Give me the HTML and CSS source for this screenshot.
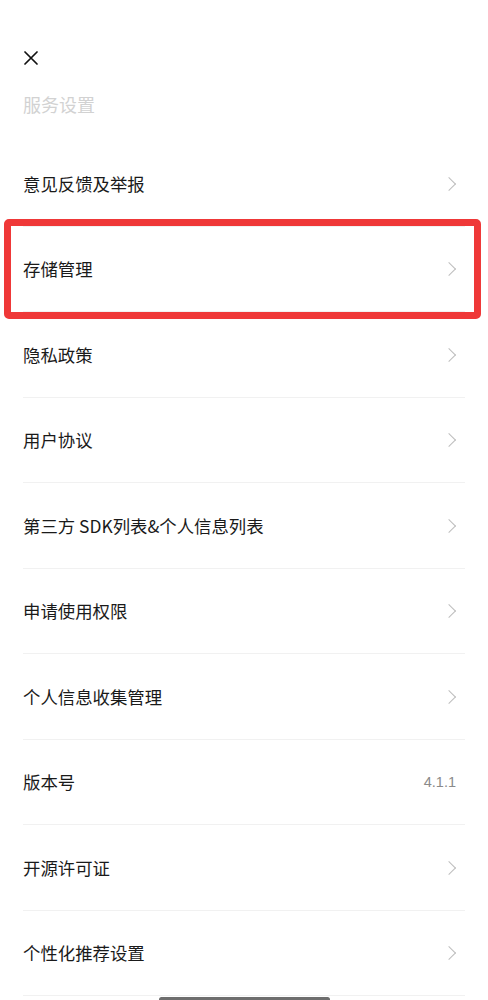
FILE: index.html
```html
<!DOCTYPE html>
<html lang="zh-CN">
<head>
<meta charset="utf-8">
<title>服务设置</title>
<link rel="stylesheet" href="styles.css">
</head>
<body>
<div class="page">
  <header class="header">
    <svg class="close" viewBox="0 0 14 14" width="14" height="14" aria-label="关闭">
      <path d="M1 1 L13 13 M13 1 L1 13" stroke="#111" stroke-width="1.7" stroke-linecap="round" fill="none"/>
    </svg>
    <h1 class="title">服务设置</h1>
  </header>
  <ul class="list">
    <li class="row"><span class="label">意见反馈及举报</span><span class="chev"></span></li>
    <li class="row row-marked"><span class="label">存储管理</span><span class="chev"></span><span class="highlight"></span></li>
    <li class="row"><span class="label">隐私政策</span><span class="chev"></span></li>
    <li class="row"><span class="label">用户协议</span><span class="chev"></span></li>
    <li class="row"><span class="label">第三方 SDK列表&amp;个人信息列表</span><span class="chev"></span></li>
    <li class="row"><span class="label">申请使用权限</span><span class="chev"></span></li>
    <li class="row"><span class="label">个人信息收集管理</span><span class="chev"></span></li>
    <li class="row"><span class="label">版本号</span><span class="value">4.1.1</span></li>
    <li class="row"><span class="label">开源许可证</span><span class="chev"></span></li>
    <li class="row"><span class="label">个性化推荐设置</span><span class="chev"></span></li>
  </ul>
  <div class="home-indicator"></div>
</div>
</body>
</html>
```
FILE: styles.css
```css
html, body {
  margin: 0;
  padding: 0;
  background: #fff;
}
body {
  font-family: "Noto Sans CJK SC", "Noto Sans", sans-serif;
  color: #1a1a1a;
  overflow: hidden;
}
.page {
  position: relative;
  height: 1000px;
  padding: 0 23px;
}
.header {
  padding-top: 51px;
}
.close {
  display: block;
  margin-left: 1px;
}
.title {
  margin: 26px 0 0;
  font-size: 18px;
  line-height: 26px;
  font-weight: 400;
  color: #d2d2d2;
}
.list {
  list-style: none;
  margin: 24.25px 0 0;
  padding: 0;
}
.row {
  position: relative;
  box-sizing: border-box;
  height: 85.5px;
  display: flex;
  align-items: center;
  justify-content: space-between;
  padding-right: 9px;
  border-bottom: 1px solid #f1f1f1;
  font-size: 17.4px;
}
.label {
  line-height: 24px;
}
.label:not(:only-child) {
  letter-spacing: 0;
}
.chev {
  width: 9px;
  height: 9px;
  border-top: 1.3px solid #bdbdbd;
  border-right: 1.3px solid #bdbdbd;
  transform: rotate(45deg);
  margin-right: 2px;
}
.value {
  font-family: "Liberation Sans", Arial, sans-serif;
  font-size: 14.5px;
  color: #8a8a8a;
}
.highlight {
  position: absolute;
  top: -7.5px;
  bottom: -7.5px;
  left: -19px;
  right: -16px;
  border: 7.5px solid #ef3838;
  border-radius: 5px;
  pointer-events: none;
}
.home-indicator {
  position: absolute;
  left: 159px;
  width: 171px;
  bottom: -2px;
  height: 5px;
  border-radius: 3px;
  background: #6e6e6e;
}
```
